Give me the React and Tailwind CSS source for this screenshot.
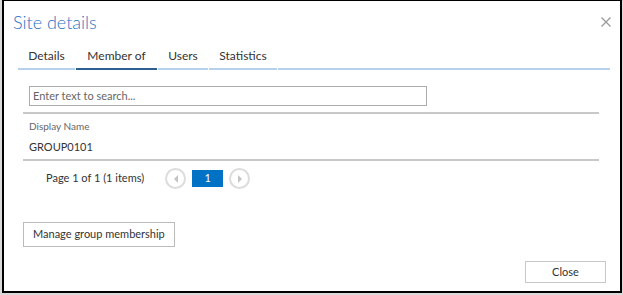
const tabs = [
  { label: 'Details', w: 'w-[57px]' },
  { label: 'Member of', w: 'w-[81px]', active: true },
  { label: 'Users', w: 'w-[50px]' },
  { label: 'Statistics', w: 'w-[68px]' },
]

function Arrow({ dir }) {
  return (
    <button className="flex h-[21px] w-[21px] items-center justify-center rounded-full border-2 border-[#dcdcdc] bg-white">
      <svg width="6" height="8" viewBox="0 0 6 8">
        {dir === 'left'
          ? <path d="M5 0 L1 4 L5 8 Z" fill="#c4c4c4" />
          : <path d="M1 0 L5 4 L1 8 Z" fill="#c4c4c4" />}
      </svg>
    </button>
  )
}

export default function App() {
  return (
    <div className="h-[295px] w-[623px] bg-[#d9d9d9] pl-[2px] font-['Lato',sans-serif] text-[#333]">
      <div className="flex h-[293px] w-[620px] flex-col border-2 border-t border-black bg-white">
        <div className="flex items-start justify-between pl-[9px] pr-[9px] pt-[8px]">
          <h1 className="text-[18px] font-light leading-[26px] text-[#2672c4]">Site details</h1>
          <svg className="mt-[8px]" width="10" height="10" viewBox="0 0 10 10">
            <path d="M0.5 0.5 L9.5 9.5 M9.5 0.5 L0.5 9.5" stroke="#9a9a9a" strokeWidth="1.3" />
          </svg>
        </div>

        <div className="mt-[11px] flex gap-[1px] pl-[14px] pr-[10px]">
          {tabs.map(t => (
            <div
              key={t.label}
              className={`${t.w} border-b-2 pb-[3px] text-center text-[12px] leading-[19px] ${t.active ? 'border-[#2d5f91]' : 'border-[#b5d1ec]'}`}
            >
              {t.label}
            </div>
          ))}
          <div className="flex-1 border-b-2 border-[#b5d1ec]" />
        </div>

        <div className="pl-[19px] pr-[21px] pt-[16px] text-[11px]">
          <div className="ml-[6px] h-[20px] w-[398px] border border-[#ababab] px-[3px] leading-[18px] text-[#666]">
            Enter text to search...
          </div>

          <div className="mt-[6px] border-t-2 border-[#c8c8c8] pl-[6px] pt-[5px] text-[10px] leading-[14px] text-[#666]">
            Display Name
          </div>
          <div className="border-b-2 border-[#c8c8c8] pb-[4px] pl-[6px] pt-[6px] leading-[16px]">
            GROUP0101
          </div>

          <div className="mt-[7px] flex items-center pl-[23px]">
            <span>Page 1 of 1 (1 items)</span>
            <div className="ml-[21px] flex items-center gap-[6px]">
              <Arrow dir="left" />
              <span className="flex h-[17px] w-[31px] items-center justify-center bg-[#0072c6] text-white">1</span>
              <Arrow dir="right" />
            </div>
          </div>

          <button className="mt-[33px] h-[25px] border border-[#bbb] px-[9px]">
            Manage group membership
          </button>
        </div>

        <div className="mt-auto flex justify-end pb-[8px] pr-[14px] text-[11px]">
          <button className="h-[22px] w-[81px] border border-[#c8c8c8]">Close</button>
        </div>
      </div>
    </div>
  )
}
